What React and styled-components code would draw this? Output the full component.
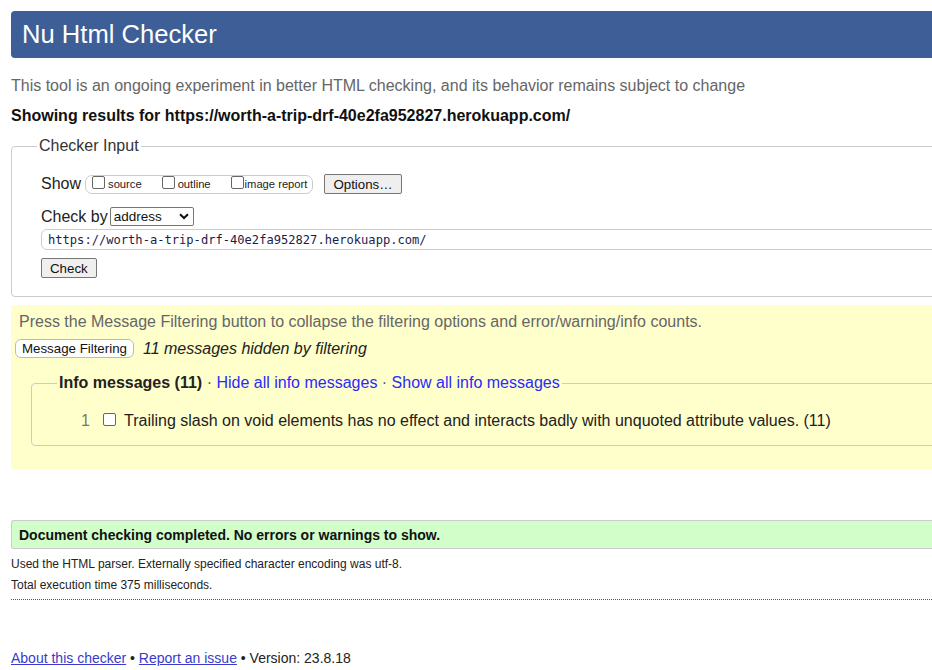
import React from "react";
import styled, { createGlobalStyle } from "styled-components";

const Global = createGlobalStyle`
  html, body { margin: 0; padding: 0; overflow: hidden; background: #fff; }
  body { font-family: "Liberation Sans", Arial, sans-serif; color: #222; }
`;

const Page = styled.div`
  width: 1060px;
  padding: 11px 0 0 11px;
  box-sizing: border-box;
`;

const Header = styled.h1`
  margin: 0;
  height: 47px;
  background: #3d5e96;
  border-radius: 4px 0 0 4px;
  color: #fff;
  font-weight: normal;
  font-size: 25.6px;
  line-height: 47px;
  padding-left: 11px;
`;

const Intro = styled.p`
  margin: 19px 0 0;
  font-size: 16px;
  line-height: 18px;
  color: #666;
`;

const ResultsFor = styled.p`
  margin: 12px 0 0;
  font-size: 16px;
  line-height: 18px;
  font-weight: bold;
  color: #111;
`;

const Fieldset = styled.fieldset`
  margin: ${(p) => p.$mt || 0}px 0 0 ${(p) => p.$ml || 0}px;
  border: 1px solid #ccc;
  border-radius: 4px;
  padding: ${(p) => p.$pad};
  min-width: 0;
`;

const Legend = styled.legend`
  margin-left: ${(p) => p.$ml ?? -4}px;
  padding: 0 2px;
  font-size: 16px;
  line-height: 18px;
  color: ${(p) => p.$color || "#333"};
`;

const Row = styled.div`
  display: flex;
  align-items: center;
  gap: ${(p) => p.$gap || 0}px;
  margin-top: ${(p) => p.$mt || 0}px;
`;

const Label = styled.span`
  font-size: 16px;
  color: #222;
`;

const CheckGroup = styled.div`
  display: flex;
  align-items: center;
  height: 17px;
  margin-left: 4px;
  border: 1px solid #ccc;
  border-radius: 7px;
  padding: 0 5px 0 6px;
`;

const CheckItem = styled.label`
  display: flex;
  align-items: center;
  font-size: 11.2px;
  color: #222;
  margin-right: ${(p) => p.$mr || 0}px;
`;

const Box = styled.span`
  display: inline-block;
  width: 11px;
  height: 11px;
  border: 1px solid #666;
  border-radius: 2px;
  background: #fff;
  margin-right: ${(p) => p.$mr || 3}px;
  margin-top: -4px;
`;

const Button = styled.span`
  display: inline-flex;
  align-items: center;
  justify-content: center;
  box-sizing: border-box;
  height: ${(p) => p.$h || 20}px;
  padding: 0 ${(p) => p.$px || 6}px;
  border: 1px solid ${(p) => (p.$light ? "#bbb" : "#767676")};
  border-radius: ${(p) => p.$r || 2}px;
  background: ${(p) => (p.$light ? "#fff" : "#efefef")};
  font-size: 13.3px;
  color: #111;
  margin-left: ${(p) => p.$ml || 0}px;
`;

const Select = styled.span`
  display: inline-flex;
  align-items: center;
  justify-content: space-between;
  box-sizing: border-box;
  width: 84px;
  height: 19px;
  margin-left: 2px;
  padding: 0 4px 0 3px;
  border: 1px solid #767676;
  border-radius: 2px;
  font-size: 13.5px;
  color: #111;
  background: #fff;
`;

const UrlInput = styled.div`
  box-sizing: border-box;
  height: 21px;
  margin-top: 3px;
  border: 1px solid #ccc;
  border-radius: 6px;
  padding-left: 6px;
  display: flex;
  align-items: center;
  font-family: "DejaVu Sans Mono", "Liberation Mono", monospace;
  font-size: 12.1px;
  color: #1c1c4a;
`;

const Filters = styled.section`
  margin-top: 8px;
  background: #ffffcc;
  padding: 8px 0 23px 4px;
`;

const Hint = styled.p`
  margin: 0 0 0 4px;
  font-size: 16px;
  line-height: 18px;
  color: #666;
`;

const Hidden = styled.em`
  font-size: 16px;
  color: #222;
  margin-left: 9px;
`;

const LegendStrong = styled.strong`
  color: #222;
`;

const Sep = styled.span`
  color: #555;
`;

const InfoLink = styled.a`
  color: #2a2aff;
  text-decoration: none;
`;

const Msg = styled.div`
  display: flex;
  align-items: center;
  font-size: 16px;
  color: #222;
`;

const Num = styled.span`
  color: #777;
  width: 22px;
`;

const Success = styled.div`
  margin-top: 51px;
  height: 29px;
  box-sizing: border-box;
  background: #d2ffc9;
  border: 1px solid #ccc;
  border-right: none;
  border-radius: 3px 0 0 3px;
  padding-left: 7px;
  display: flex;
  align-items: center;
  font-weight: bold;
  font-size: 14px;
  color: #111;
`;

const Details = styled.div`
  border-bottom: 1px dotted #555;
  padding: 8px 0 7px;
`;

const Small = styled.p`
  margin: ${(p) => p.$mt || 0}px 0 0;
  font-size: 12px;
  line-height: 14px;
  color: #222;
`;

const Footer = styled.footer`
  margin-top: 50px;
  font-size: 14px;
  color: #222;
`;

const FootLink = styled.a`
  color: #3a3acc;
  text-decoration: underline;
`;

const Chevron = () => (
  <svg width="10" height="7" viewBox="0 0 10 7">
    <path d="M1 1.2 L5 5 L9 1.2" fill="none" stroke="#111" strokeWidth="2" />
  </svg>
);

export default function App() {
  return (
    <Page>
      <Global />
      <Header>Nu Html Checker</Header>
      <Intro>
        This tool is an ongoing experiment in better HTML checking, and its behavior
        remains subject to change
      </Intro>
      <ResultsFor>
        Showing results for https://worth-a-trip-drf-40e2fa952827.herokuapp.com/
      </ResultsFor>

      <Fieldset $mt={12} $pad="19px 0 18px 29px">
        <Legend>Checker Input</Legend>
        <Row>
          <Label>Show</Label>
          <CheckGroup>
            <CheckItem $mr={20}>
              <Box />
              source
            </CheckItem>
            <CheckItem $mr={20}>
              <Box />
              outline
            </CheckItem>
            <CheckItem>
              <Box $mr={1} />
              image report
            </CheckItem>
          </CheckGroup>
          <Button $ml={11} $px={8}>Options…</Button>
        </Row>
        <Row $mt={13}>
          <Label>Check by</Label>
          <Select>
            address
            <Chevron />
          </Select>
        </Row>
        <UrlInput>https://worth-a-trip-drf-40e2fa952827.herokuapp.com/</UrlInput>
        <Row $mt={8}>
          <Button $px={8}>Check</Button>
        </Row>
      </Fieldset>

      <Filters>
        <Hint>
          Press the Message Filtering button to collapse the filtering options and
          error/warning/info counts.
        </Hint>
        <Row $mt={8}>
          <Button $light $r={6} $h={19} $px={6}>Message Filtering</Button>
          <Hidden>11 messages hidden by filtering</Hidden>
        </Row>
        <Fieldset $mt={16} $ml={16} $pad="20px 0 15px 49px">
          <Legend $ml={-24}>
            <LegendStrong>Info messages (11)</LegendStrong> <Sep>·</Sep>{" "}
            <InfoLink>Hide all info messages</InfoLink> <Sep>·</Sep>{" "}
            <InfoLink>Show all info messages</InfoLink>
          </Legend>
          <Msg>
            <Num>1</Num>
            <Box $mr={8} />
            Trailing slash on void elements has no effect and interacts badly with
            unquoted attribute values. (11)
          </Msg>
        </Fieldset>
      </Filters>

      <Success>Document checking completed. No errors or warnings to show.</Success>
      <Details>
        <Small>
          Used the HTML parser. Externally specified character encoding was utf-8.
        </Small>
        <Small $mt={7}>Total execution time 375 milliseconds.</Small>
      </Details>

      <Footer>
        <FootLink>About this checker</FootLink> • <FootLink>Report an issue</FootLink> •
        Version: 23.8.18
      </Footer>
    </Page>
  );
}
